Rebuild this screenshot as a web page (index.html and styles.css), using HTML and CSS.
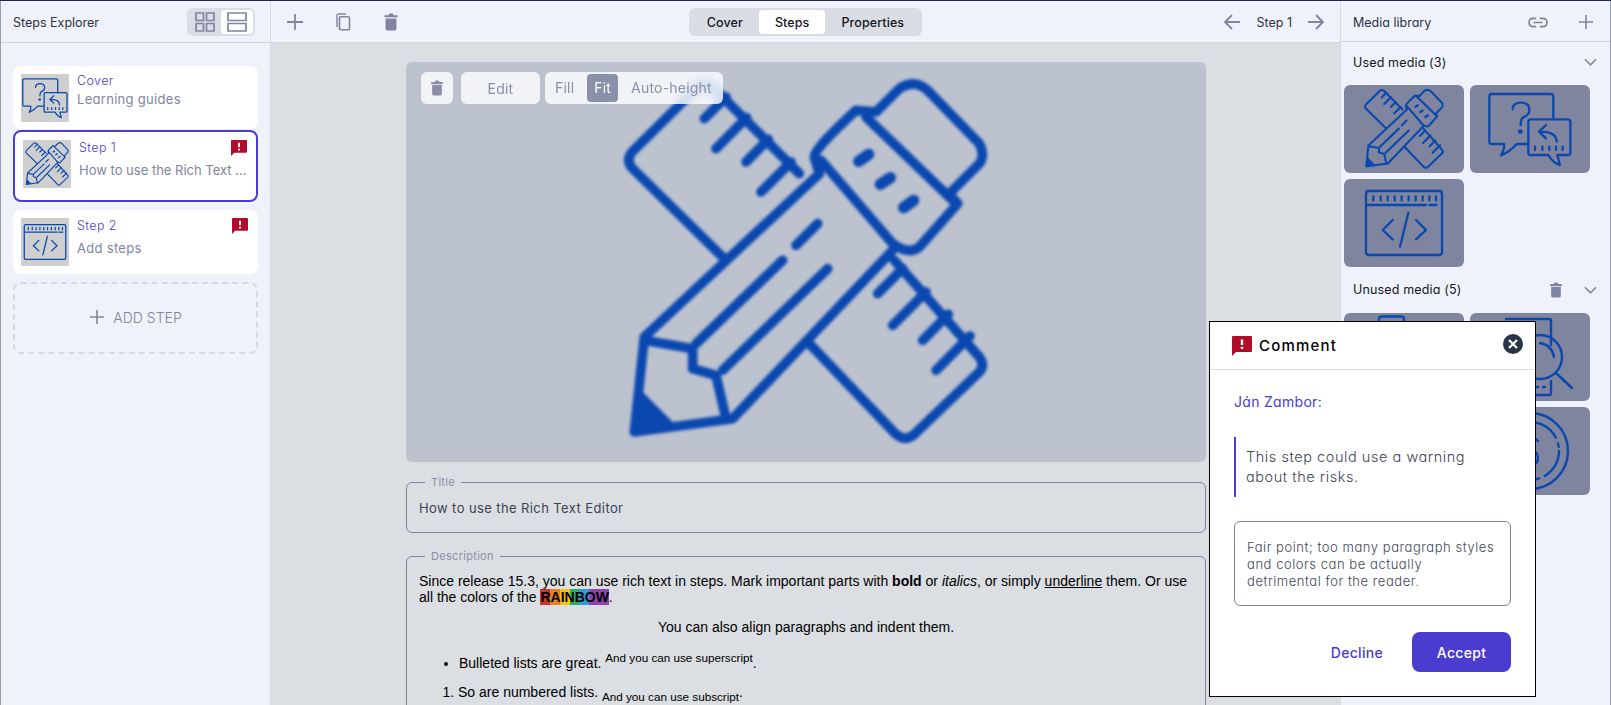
FILE: index.html
```html
<!DOCTYPE html>
<html lang="en">
<head>
<meta charset="UTF-8">
<title>Steps Explorer</title>
<link rel="stylesheet" href="styles.css">
</head>
<body>
<!-- shared icons -->
<svg class="defs" width="0" height="0">
    <symbol id="pic-pencil" viewBox="20 5 1200 1200">
        <g fill="none" stroke="currentColor" stroke-width="29" stroke-linecap="round" stroke-linejoin="round">
            <path d="M600 340L345 85Q315 62 290 85L98 275Q78 300 100 325L375 595"/>
            <path d="M885 600L1140 890Q1158 915 1140 935L945 1122Q920 1145 890 1122L630 850"/>
            <path d="M315 175L380 110M350 265L442 172M440 305L507 237M485 395L575 305"/>
            <path d="M835 700L910 625M880 795L980 695M970 840L1047 762M1010 930L1112 827"/>
            <path d="M135 830L660 340M400 1075L880 570M135 830L105 1115L400 1075"/>
            <path d="M135 840L280 865L280 925L350 945L380 1075"/>
            <path d="M290 850L550 600M370 930L685 625M590 555L655 490"/>
            <path d="M660 340L645 290Q640 270 770 150L830 155L900 85Q945 55 985 90L1140 250Q1158 285 1140 310L1050 400L1075 430L960 560Q930 585 880 550L665 300"/>
            <path d="M800 170L1060 420"/>
            <path stroke-width="34" d="M778 303L808 282M843 372L873 352M913 442L943 420"/>
        </g>
        <path fill="currentColor" d="M125 990L105 1120L220 1085Z"/>
    </symbol>
    <symbol id="pic-question" viewBox="438 15 264 264">
        <g fill="none" stroke="currentColor" stroke-width="7" stroke-linecap="round" stroke-linejoin="round">
            <path d="M565 192L530 192Q510 215 483 226Q495 205 492 192L455 192Q448 192 448 185L448 50Q448 42 455 42L632 42Q640 42 640 50L640 118"/>
            <path d="M518 88Q518 68 543 68Q568 68 568 90Q568 105 550 112Q542 117 542 135"/>
            <path d="M572 118L684 118Q691 118 691 125L691 218Q691 225 684 225L652 225Q655 240 660 255Q640 250 625 225L572 225Q565 225 565 218L565 125Q565 118 572 118Z"/>
            <path d="M650 185Q650 155 600 155M618 135L597 155L618 175"/>
            <path d="M585 200V210M607 200V210M628 200V210M648 200V210M668 200V210"/>
        </g>
        <circle cx="541" cy="155" r="7" fill="currentColor"/>
    </symbol>
    <symbol id="pic-code" viewBox="60 297 264 264">
        <g fill="none" stroke="currentColor" stroke-width="7" stroke-linecap="round" stroke-linejoin="round">
            <rect x="78" y="333" width="228" height="192" rx="8"/>
            <path d="M78 375H258M268 375H290"/>
            <path d="M100 349V361M122 349V361M143 349V361M164 349V361M185 349V361M206 349V361M227 349V361M248 349V361M268 349V361M288 349V361"/>
            <path d="M158 420L128 450L158 478M228 420L258 450L228 478M205 398L180 500"/>
        </g>
    </symbol>
    <symbol id="pic-search" viewBox="0 0 88 88">
        <g fill="none" stroke="currentColor" stroke-width="2.4" stroke-linecap="round" stroke-linejoin="round">
            <path d="M20 6H63Q65 6 65 8V32M65 68V80Q65 82 63 82H20"/>
            <circle cx="54" cy="44" r="22"/>
            <path d="M54 30Q66 32 68 44M70 60L86 75M50 74H52M57 74H59"/>
        </g>
    </symbol>
    <symbol id="pic-coin" viewBox="0 0 88 88">
        <g fill="none" stroke="currentColor" stroke-width="2.4" stroke-linecap="round">
            <circle cx="44" cy="44" r="38"/>
            <circle cx="44" cy="44" r="29" stroke-dasharray="30 6 4 6"/>
            <path d="M52 34Q48 30 44 30Q36 30 36 37Q36 44 44 44Q52 44 52 51Q52 58 44 58Q38 58 35 54M44 24V64"/>
        </g>
    </symbol>
    <symbol id="pic-lamp" viewBox="0 0 88 88">
        <path d="M19 12V6Q19 3.5 22 3.5H41Q44 3.5 44 6V12" fill="none" stroke="currentColor" stroke-width="2.4"/>
    </symbol>
    <symbol id="ic-plus" viewBox="0 0 18 18">
        <path d="M9 1V17M1 9H17" fill="none" stroke="currentColor" stroke-width="1.8"/>
    </symbol>
    <symbol id="ic-copy" viewBox="0 0 18 18">
        <path d="M3 14V2.5Q3 1 4.5 1H12" fill="none" stroke="currentColor" stroke-width="1.4"/>
        <rect x="5.5" y="3.8" width="10" height="13" rx="1.2" fill="none" stroke="currentColor" stroke-width="1.6"/>
    </symbol>
    <symbol id="ic-trash" viewBox="1 1 12 16.5">
        <path d="M1 3H4.5L5.5 1.5H8.5L9.5 3H13V5H1ZM2 6H12V15.5Q12 17 10.5 17H3.5Q2 17 2 15.5Z" fill="currentColor"/>
    </symbol>
    <symbol id="ic-left" viewBox="0 0 18 18">
        <path d="M17 9H2M9 2L2 9L9 16" fill="none" stroke="currentColor" stroke-width="1.8"/>
    </symbol>
    <symbol id="ic-right" viewBox="0 0 18 18">
        <path d="M1 9H16M9 2L16 9L9 16" fill="none" stroke="currentColor" stroke-width="1.8"/>
    </symbol>
    <symbol id="ic-link" viewBox="0 0 22 12">
        <path d="M9 1.5H6Q1.2 1.5 1.2 6Q1.2 10.5 6 10.5H9M13 1.5H16Q20.8 1.5 20.8 6Q20.8 10.5 16 10.5H13M6 6H16" fill="none" stroke="currentColor" stroke-width="1.9"/>
    </symbol>
    <symbol id="ic-down" viewBox="0 0 14 8">
        <path d="M1 1L7 7L13 1" fill="none" stroke="currentColor" stroke-width="1.7"/>
    </symbol>
    <symbol id="ic-flag" viewBox="0 0 20 20">
        <path fill-rule="evenodd" d="M1 0H19Q20 0 20 1V15Q20 16 19 16H4L0 20V1Q0 0 1 0ZM8.8 3.5V9H11.2V3.5ZM8.8 10.8V13H11.2V10.8Z" fill="currentColor"/>
    </symbol>
</svg>

<div class="app">
    <aside class="side side-left">
        <header class="bar">
            <span class="bar-title">Steps Explorer</span>
            <div class="view-toggle">
                <span class="view-btn">
                    <svg width="20" height="20" viewBox="0 0 20 20"><path d="M1 1H8.5V8.5H1ZM11.5 1H19V8.5H11.5ZM1 11.5H8.5V19H1ZM11.5 11.5H19V19H11.5Z" fill="none" stroke="currentColor" stroke-width="1.7"/></svg>
                </span>
                <span class="view-btn view-on">
                    <svg width="20" height="20" viewBox="0 0 20 20"><path d="M1 1H19V8.5H1ZM1 11.5H19V19H1Z" fill="none" stroke="currentColor" stroke-width="1.7"/></svg>
                </span>
            </div>
        </header>
        <div class="step-list">
            <div class="card card-cover">
                <div class="thumb"><svg><use href="#pic-question"/></svg></div>
                <div class="card-body">
                    <div class="card-top"><span class="card-name">Cover</span></div>
                    <div class="card-desc">Learning guides</div>
                </div>
            </div>
            <div class="card card-on">
                <div class="thumb"><svg><use href="#pic-pencil"/></svg></div>
                <div class="card-body">
                    <div class="card-top"><span class="card-name">Step 1</span><svg class="flag"><use href="#ic-flag"/></svg></div>
                    <div class="card-desc">How to use the Rich Text Editor</div>
                </div>
            </div>
            <div class="card">
                <div class="thumb"><svg><use href="#pic-code"/></svg></div>
                <div class="card-body">
                    <div class="card-top"><span class="card-name">Step 2</span><svg class="flag"><use href="#ic-flag"/></svg></div>
                    <div class="card-desc">Add steps</div>
                </div>
            </div>
            <div class="add-step"><svg class="ic16"><use href="#ic-plus"/></svg>ADD STEP</div>
        </div>
    </aside>

    <main class="center">
        <header class="bar bar-center">
            <div class="tools">
                <svg class="ic18"><use href="#ic-plus"/></svg>
                <svg class="ic18"><use href="#ic-copy"/></svg>
                <svg class="ic18"><use href="#ic-trash"/></svg>
            </div>
            <div class="tabs">
                <span class="tab">Cover</span>
                <span class="tab tab-on">Steps</span>
                <span class="tab">Properties</span>
            </div>
            <div class="pager">
                <svg class="ic18"><use href="#ic-left"/></svg>
                <span>Step 1</span>
                <svg class="ic18"><use href="#ic-right"/></svg>
            </div>
        </header>
        <div class="stage">
            <div class="image-panel">
                <svg class="big-pic"><use href="#pic-pencil"/></svg>
                <div class="image-tools">
                    <span class="itool itool-trash"><svg width="12" height="16"><use href="#ic-trash"/></svg></span>
                    <span class="itool itool-edit">Edit</span>
                    <div class="itool fit-group">
                        <span class="fit">Fill</span>
                        <span class="fit fit-on">Fit</span>
                        <span class="fit">Auto-height</span>
                    </div>
                </div>
            </div>
            <fieldset class="field field-title">
                <legend>Title</legend>
                <div class="title-value">How to use the Rich Text Editor</div>
            </fieldset>
            <fieldset class="field field-desc">
                <legend>Description</legend>
                <div class="rich">
                    <p>Since release 15.3, you can use rich text in steps. Mark important parts with <b>bold</b> or <i>italics</i>, or simply <u>underline</u> them. Or use all the colors of the <b class="rainbow">RAINBOW</b>.</p>
                    <p class="mid">You can also align paragraphs and indent them.</p>
                    <ul><li>Bulleted lists are great. <sup>And you can use superscript</sup>.</li></ul>
                    <ol><li>So are numbered lists. <sub>And you can use subscript</sub>.</li></ol>
                </div>
            </fieldset>
        </div>
    </main>

    <aside class="side side-right">
        <header class="bar">
            <span class="bar-title">Media library</span>
            <div class="bar-icons">
                <svg class="ic-link"><use href="#ic-link"/></svg>
                <svg class="ic16"><use href="#ic-plus"/></svg>
            </div>
        </header>
        <div class="media-head">
            <span>Used media (3)</span>
            <svg class="chev"><use href="#ic-down"/></svg>
        </div>
        <div class="media-grid">
            <div class="media"><svg><use href="#pic-pencil"/></svg></div>
            <div class="media"><svg><use href="#pic-question"/></svg></div>
            <div class="media"><svg><use href="#pic-code"/></svg></div>
        </div>
        <div class="media-head media-head2">
            <span>Unused media (5)</span>
            <svg class="head-trash"><use href="#ic-trash"/></svg>
            <svg class="chev"><use href="#ic-down"/></svg>
        </div>
        <div class="media-grid">
            <div class="media"><svg><use href="#pic-lamp"/></svg></div>
            <div class="media"><svg><use href="#pic-search"/></svg></div>
            <div class="media"></div>
            <div class="media"><svg><use href="#pic-coin"/></svg></div>
        </div>
    </aside>
</div>

<!-- comment popup -->
<div class="comment">
    <div class="comment-head">
        <svg class="comment-flag"><use href="#ic-flag"/></svg>
        <span class="comment-title">Comment</span>
        <span class="comment-close">
            <svg width="10" height="10" viewBox="0 0 10 10"><path d="M1 1L9 9M9 1L1 9" stroke="#fff" stroke-width="2.2"/></svg>
        </span>
    </div>
    <div class="comment-body">
        <div class="comment-author">Ján Zambor:</div>
        <div class="comment-quote">This step could use a warning about the risks.</div>
        <div class="comment-reply">Fair point; too many paragraph styles and colors can be actually detrimental for the reader.</div>
        <div class="comment-actions">
            <span class="btn-decline">Decline</span>
            <span class="btn-accept">Accept</span>
        </div>
    </div>
</div>
</body>
</html>
```

FILE: styles.css
```css
html, body{
    margin: 0;
    height: 705px;
    overflow: hidden;
}
body{
    font-family: "Inter", "Liberation Sans", sans-serif;
    font-feature-settings: "cv11" 1;
    color: #2b3246;
    background: #dbdee2;
    position: relative;
}
.defs{
    position: absolute;
}
.app{
    display: grid;
    grid-template-columns: 271px 1fr 271px;
    height: 704px;
    border-top: 1px solid #1f2a44;
}
.side{
    background: #eff2fa;
    min-width: 0;
}
.side-left{
    border-left: 1px solid #9aa0ad;
    border-right: 1px solid #d5d9e3;
}
.side-right{
    border-left: 1px solid #d5d9e3;
    border-right: 1px solid #9aa0ad;
}
.bar{
    height: 42px;
    box-sizing: border-box;
    border-bottom: 1px solid #d0d4de;
    background: #eff2fa;
    display: flex;
    align-items: center;
    justify-content: space-between;
    padding: 1px 12px 0;
}
.bar-title{
    font-size: 12.5px;
}
.view-toggle{
    display: flex;
    align-items: center;
    background: #d9dde6;
    border-radius: 6px;
    padding: 2px;
    height: 28px;
    box-sizing: border-box;
    margin-right: 3px;
    color: #80859f;
}
.view-btn{
    width: 32px;
    height: 24px;
    display: flex;
    align-items: center;
    justify-content: center;
    border-radius: 4px;
}
.view-on{
    background: #fff;
}
.step-list{
    padding: 23px 12px;
}
.card{
    display: flex;
    background: #fff;
    border-radius: 8px;
    padding: 8px 10px 8px 8px;
    margin-bottom: 8px;
}
.card-cover{
    padding-bottom: 7px;
    margin-bottom: 1px;
}
.card-on{
    border: 2px solid #4a3ccf;
    padding-bottom: 12px;
    padding-right: 9px;
}
.thumb{
    width: 48px;
    height: 48px;
    flex: none;
    background: #cfcfcf;
    color: #0a48b0;
}
.thumb svg{
    display: block;
    width: 48px;
    height: 48px;
}
.card-body{
    flex: 1;
    min-width: 0;
    margin-left: 8px;
}
.card-top{
    display: flex;
    justify-content: space-between;
    height: 16px;
}
.card-name{
    font-size: 12.5px;
    font-weight: 300;
    line-height: 15px;
    letter-spacing: 0.4px;
    color: #4a3ccf;
}
.card-cover .card-name{
    margin-top: -1px;
}
.flag{
    width: 16px;
    height: 16px;
    color: #b00d2a;
}
.card-desc{
    font-size: 13px;
    line-height: 18px;
    letter-spacing: 0.3px;
    margin-top: 5px;
    color: #80859f;
    white-space: nowrap;
    overflow: hidden;
    text-overflow: ellipsis;
}
.card-on .card-desc{
    letter-spacing: 0;
}
.card-cover .card-desc{
    margin-top: 0;
}
.add-step{
    height: 72px;
    box-sizing: border-box;
    border: 2px dashed #d5d9e3;
    border-radius: 8px;
    padding-bottom: 2px;
    display: flex;
    align-items: center;
    justify-content: center;
    gap: 8px;
    font-size: 14px;
    font-weight: 300;
    color: #80859f;
}
.ic16{
    width: 16px;
    height: 16px;
    color: #80859f;
}
.ic18{
    width: 18px;
    height: 18px;
    color: #80859f;
}
.center{
    min-width: 0;
}
.bar-center{
    display: grid;
    grid-template-columns: 1fr auto 1fr;
    padding: 1px 15px 0;
}
.tools{
    display: flex;
    gap: 30px;
}
.tabs{
    display: flex;
    align-items: center;
    height: 28px;
    box-sizing: border-box;
    padding: 2px;
    background: #dadde3;
    border-radius: 6px;
    font-size: 12.5px;
    font-weight: 500;
    letter-spacing: 0.1px;
    color: #14171f;
}
.tab{
    height: 24px;
    box-sizing: border-box;
    padding: 1px 16px 0;
    line-height: 24px;
    border-radius: 4px;
}
.tab-on{
    background: #fff;
}
.pager{
    display: flex;
    align-items: center;
    justify-content: flex-end;
    gap: 15px;
    font-size: 12.5px;
}
.stage{
    width: 800px;
    margin-left: 135px;
    padding-top: 19px;
}
.image-panel{
    height: 400px;
    background: #bdc2cf;
    border-radius: 6px;
    display: flex;
    justify-content: center;
    position: relative;
    overflow: hidden;
    color: #0a48b0;
}
.big-pic{
    width: 400px;
    height: 400px;
    filter: blur(1.8px);
}
.image-tools{
    position: absolute;
    left: 15px;
    top: 10px;
    display: flex;
}
.itool{
    height: 32px;
    box-sizing: border-box;
    background: rgba(255, 255, 255, 0.8);
    backdrop-filter: blur(4px);
    border-radius: 6px;
    display: flex;
    align-items: center;
    justify-content: center;
    font-size: 14px;
    letter-spacing: 0.2px;
    color: #8a8fa8;
}
.itool-trash{
    width: 32px;
}
.itool-edit{
    width: 79px;
    margin-left: 8px;
}
.fit-group{
    margin-left: 5px;
    padding: 0 3px;
    width: 178px;
    gap: 6px;
    justify-content: flex-start;
}
.fit{
    padding: 0 7px;
    line-height: 28px;
    border-radius: 4px;
    white-space: nowrap;
}
.fit-on{
    background: #8b90a9;
    color: #fff;
}
.field{
    margin: 0;
    padding: 0 12px;
    border: 1px solid #7d84a0;
    border-radius: 6px;
    min-width: 0;
    background: #dbdee2;
}
.field legend{
    margin-left: 6px;
    padding: 0 6px;
    font-size: 11px;
    line-height: 14px;
    letter-spacing: 0.3px;
    color: #8a8fa8;
}
.field-title{
    margin-top: 13px;
    height: 56px;
}
.title-value{
    font-size: 13px;
    line-height: 16px;
    letter-spacing: 0.4px;
    margin-top: 11px;
    color: #3c4356;
}
.field-desc{
    margin-top: 16px;
    height: 300px;
}
.rich{
    font-family: "Liberation Sans", Arial, sans-serif;
    font-feature-settings: normal;
    font-size: 14px;
    line-height: 16px;
    color: #000;
    margin-top: 10px;
}
.rich p{
    margin: 0 0 14px;
}
.rich .mid{
    margin-bottom: 15px;
    text-align: center;
}
.rich ul, .rich ol{
    margin: 0 0 13px;
    padding-left: 40px;
}
.rich sup, .rich sub{
    font-size: 11.7px;
}
.rich ol{
    padding-left: 39px;
}
.rainbow{
    background: linear-gradient(90deg, #c0392b 0 14.3%, #e67e22 14.3% 28.6%, #f1c40f 28.6% 42.9%, #27ae60 42.9% 57.2%, #3498db 57.2% 71.5%, #8e44ad 71.5% 100%);
}
.bar-icons{
    display: flex;
    align-items: center;
    gap: 30px;
    margin-right: 5px;
}
.ic-link{
    width: 20px;
    height: 11px;
    color: #80859f;
}
.side-right .bar{
    height: 41px;
    padding: 2px 11px 0 12px;
}
.media-head{
    display: flex;
    align-items: center;
    height: 43px;
    box-sizing: border-box;
    padding: 0 13px 3px 12px;
    font-size: 12.5px;
    letter-spacing: 0.15px;
    color: #14171f;
}
.media-head span{
    flex: 1;
}
.media-head2{
    height: 46px;
    padding-bottom: 1px;
}
.chev{
    width: 13px;
    height: 8px;
    color: #80859f;
}
.head-trash{
    width: 12px;
    height: 16px;
    margin-right: 22px;
    color: #80859f;
}
.media-grid{
    display: grid;
    grid-template-columns: 120px 120px;
    grid-auto-rows: 88px;
    gap: 6px;
    padding-left: 3px;
}
.media{
    background: #80859f;
    border-radius: 6px;
    color: #0a48b0;
    display: flex;
    justify-content: center;
}
.media svg{
    width: 88px;
    height: 88px;
}
.comment{
    position: absolute;
    left: 1209px;
    top: 321px;
    width: 327px;
    height: 376px;
    box-sizing: border-box;
    background: #fff;
    border: 1px solid #000;
}
.comment-head{
    display: flex;
    align-items: center;
    height: 47px;
    padding: 0 12px 0 22px;
    border-bottom: 1px solid #dcdee4;
}
.comment-flag{
    width: 20px;
    height: 20px;
    color: #b00d2a;
}
.comment-title{
    flex: 1;
    margin-left: 7px;
    font-size: 15px;
    font-weight: 500;
    letter-spacing: 1.2px;
    color: #000;
}
.comment-close{
    width: 20px;
    height: 20px;
    border-radius: 50%;
    background: #2b3246;
    display: flex;
    align-items: center;
    justify-content: center;
    margin-top: -4px;
}
.comment-body{
    padding: 23px 24px 0;
}
.comment-author{
    font-size: 14px;
    line-height: 18px;
    letter-spacing: 0.3px;
    color: #4a3ccf;
}
.comment-quote{
    margin-top: 26px;
    height: 60px;
    box-sizing: border-box;
    border-left: 2px solid #4a3ccf;
    padding: 10px 40px 10px 10px;
    font-size: 14.5px;
    font-weight: 300;
    line-height: 20px;
    letter-spacing: 0.55px;
    color: #3f4659;
}
.comment-reply{
    margin-top: 24px;
    height: 85px;
    box-sizing: border-box;
    border: 1px solid #7d84a0;
    border-radius: 6px;
    padding: 17px 12px;
    font-size: 13px;
    font-weight: 300;
    line-height: 17px;
    letter-spacing: 0.55px;
    color: #3f4659;
}
.comment-actions{
    display: flex;
    align-items: center;
    justify-content: flex-end;
    margin-top: 26px;
    font-size: 14px;
    font-weight: 500;
    letter-spacing: 0.3px;
}
.btn-decline{
    color: #4a3ccf;
    margin-right: 29px;
}
.btn-accept{
    width: 99px;
    height: 40px;
    display: flex;
    align-items: center;
    justify-content: center;
    background: #4a3ccf;
    border-radius: 8px;
    color: #fff;
}
```
